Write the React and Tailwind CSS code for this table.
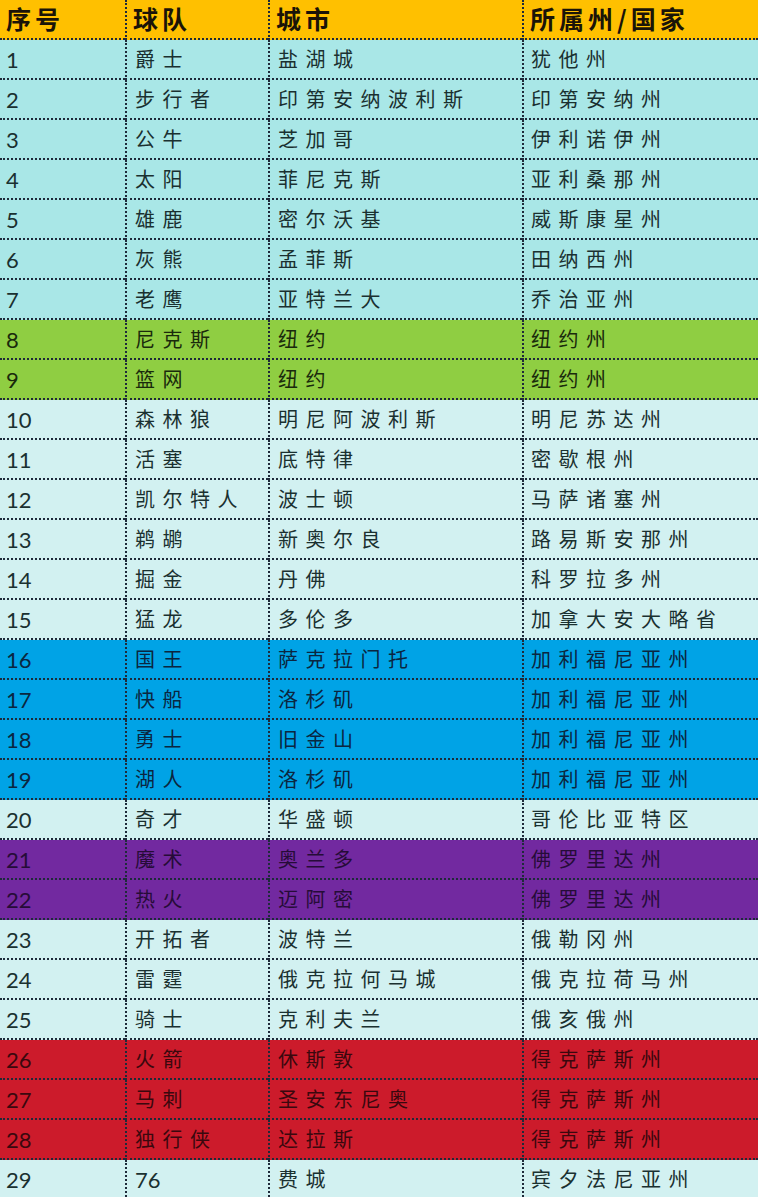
import React from "react";

const rows = [
  ["1", "爵士", "盐湖城", "犹他州", "a"],
  ["2", "步行者", "印第安纳波利斯", "印第安纳州", "a"],
  ["3", "公牛", "芝加哥", "伊利诺伊州", "a"],
  ["4", "太阳", "菲尼克斯", "亚利桑那州", "a"],
  ["5", "雄鹿", "密尔沃基", "威斯康星州", "a"],
  ["6", "灰熊", "孟菲斯", "田纳西州", "a"],
  ["7", "老鹰", "亚特兰大", "乔治亚州", "a"],
  ["8", "尼克斯", "纽约", "纽约州", "g"],
  ["9", "篮网", "纽约", "纽约州", "g"],
  ["10", "森林狼", "明尼阿波利斯", "明尼苏达州", "l"],
  ["11", "活塞", "底特律", "密歇根州", "l"],
  ["12", "凯尔特人", "波士顿", "马萨诸塞州", "l"],
  ["13", "鹈鹕", "新奥尔良", "路易斯安那州", "l"],
  ["14", "掘金", "丹佛", "科罗拉多州", "l"],
  ["15", "猛龙", "多伦多", "加拿大安大略省", "l"],
  ["16", "国王", "萨克拉门托", "加利福尼亚州", "b"],
  ["17", "快船", "洛杉矶", "加利福尼亚州", "b"],
  ["18", "勇士", "旧金山", "加利福尼亚州", "b"],
  ["19", "湖人", "洛杉矶", "加利福尼亚州", "b"],
  ["20", "奇才", "华盛顿", "哥伦比亚特区", "l"],
  ["21", "魔术", "奥兰多", "佛罗里达州", "p"],
  ["22", "热火", "迈阿密", "佛罗里达州", "p"],
  ["23", "开拓者", "波特兰", "俄勒冈州", "l"],
  ["24", "雷霆", "俄克拉何马城", "俄克拉荷马州", "l"],
  ["25", "骑士", "克利夫兰", "俄亥俄州", "l"],
  ["26", "火箭", "休斯敦", "得克萨斯州", "r"],
  ["27", "马刺", "圣安东尼奥", "得克萨斯州", "r"],
  ["28", "独行侠", "达拉斯", "得克萨斯州", "r"],
  ["29", "76", "费城", "宾夕法尼亚州", "l"],
];

const bg = {
  a: "bg-[#a9e7e7] text-[#1a3030]",
  g: "bg-[#8fce42] text-[#1a2a0c]",
  l: "bg-[#d2f1f1] text-[#1a3030]",
  b: "bg-[#00a3e6] text-[#0b2640]",
  p: "bg-[#7229a0] text-[#260c38]",
  r: "bg-[#cc1b2b] text-[#3a080e]",
};

const CJK = "font-['Noto_Sans_CJK_SC',sans-serif] text-[20px] tracking-[7.5px]";
const NUM = "font-['Lato','Open_Sans',sans-serif] text-[22px]";
const LINE = "border-b-2 border-dotted border-[#1e2a3a]";

function Header({ children, first }) {
  return (
    <div
      className={`flex items-center pl-[6px] bg-[#ffc000] text-[#1a1408] font-['Noto_Sans_CJK_SC',sans-serif] text-[25px] font-bold tracking-[4px] ${LINE} ${first ? "" : "border-l-2"}`}
    >
      {children}
    </div>
  );
}

export default function App() {
  return (
    <div className="w-[758px] h-[1197px] overflow-hidden bg-[#d2f1f1]">
      <div className="grid grid-cols-[125px_143px_254px_236px] auto-rows-[40px]">
        <Header first>序号</Header>
        <Header>球队</Header>
        <Header>城市</Header>
        <Header>所属州/国家</Header>
        {rows.map(([n, team, city, state, c]) => (
          <React.Fragment key={n}>
            <div className={`flex items-center pl-[6px] pt-[1px] ${bg[c]} ${LINE} ${NUM}`}>{n}</div>
            <div
              className={`flex items-center pl-[8px] ${bg[c]} ${LINE} border-l-2 ${team === "76" ? NUM : CJK}`}
            >
              {team}
            </div>
            <div className={`flex items-center pl-[8px] ${bg[c]} ${LINE} border-l-2 ${CJK}`}>{city}</div>
            <div className={`flex items-center pl-[7px] ${bg[c]} ${LINE} border-l-2 ${CJK}`}>{state}</div>
          </React.Fragment>
        ))}
      </div>
    </div>
  );
}
